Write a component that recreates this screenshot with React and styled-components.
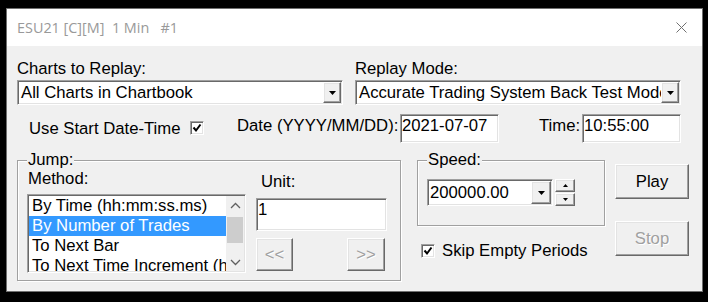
import React from 'react';
import styled, { createGlobalStyle, css } from 'styled-components';

const Global = createGlobalStyle`
  html, body { margin: 0; padding: 0; background: #000; }
  body { width: 708px; height: 302px; overflow: hidden; }
  * { box-sizing: border-box; }
`;

const sunken = css`
  border: 1px solid;
  border-color: #a0a0a0 #ffffff #ffffff #a0a0a0;
  box-shadow: inset 1px 1px 0 #696969, inset -1px -1px 0 #e3e3e3;
  background: #fff;
  padding: 1px;
`;

const raised = css`
  border: 1px solid;
  border-color: #ffffff #696969 #696969 #ffffff;
  box-shadow: inset -1px -1px 0 #a0a0a0, inset 1px 1px 0 #e3e3e3;
  background: #f0f0f0;
`;

const Window = styled.div`
  margin: 8px 0 0 6px;
  width: 697px;
  height: 284px;
  border: 1px solid #6f6f6f;
  background: #f0f0f0;
  display: flex;
  flex-direction: column;
  font-family: "Liberation Sans", Arial, sans-serif;
  font-size: 16.7px;
  line-height: 18px;
  color: #000;
`;

const TitleBar = styled.div`
  height: 37px;
  flex: none;
  background: #fff;
  display: flex;
  align-items: center;
  justify-content: space-between;
  padding: 0 15px 0 10px;
`;

const TitleText = styled.div`
  font-family: "Open Sans", "Noto Sans", sans-serif;
  font-size: 14.4px;
  color: #999999;
  white-space: pre;
  padding-top: 1px;
`;

const Body = styled.div`
  flex: 1;
  display: flex;
  flex-direction: column;
  padding: 14px 10px 0 10px;
`;

const TopRow = styled.div`
  display: flex;
  gap: 12px;
`;

const Field = styled.div`
  width: ${p => p.$w}px;
  display: flex;
  flex-direction: column;
`;

const Label = styled.div`
  white-space: nowrap;
  flex: none;
  margin-left: ${p => p.$left || 0}px;
  margin-top: ${p => p.$top || 0}px;
  width: ${p => (p.$w ? `${p.$w}px` : 'auto')};
  height: 18px;
`;

const Select = styled.div`
  ${sunken};
  margin-top: ${p => p.$mt ?? 2}px;
  display: flex;
  width: ${p => (p.$w ? `${p.$w}px` : '100%')};
  height: ${p => p.$h || 25}px;
`;

const SelectText = styled.div`
  flex: 1;
  overflow: hidden;
  white-space: nowrap;
  align-self: center;
  padding-left: ${p => p.$pad ?? 2}px;
`;

const DropBtn = styled.div`
  ${raised};
  width: ${p => p.$w || 18}px;
  flex: none;
  display: flex;
  align-items: center;
  justify-content: center;
`;

const SecondRow = styled.div`
  display: flex;
  align-items: flex-start;
  margin-top: 9px;
  height: 29px;
`;

const CheckBox = styled.div`
  ${sunken};
  width: 14px;
  height: 14px;
  flex: none;
  margin-top: ${p => p.$top || 0}px;
  margin-left: ${p => p.$left || 0}px;
  padding: 0;
  display: flex;
  align-items: center;
  justify-content: center;
`;

const TextInput = styled.div`
  ${sunken};
  flex: none;
  width: ${p => p.$w}px;
  height: ${p => p.$h}px;
  margin-top: ${p => p.$mt || 0}px;
  padding: ${p => p.$pt ?? 1}px 1px 0 1px;
  white-space: nowrap;
  overflow: hidden;
`;

const ThirdRow = styled.div`
  display: flex;
  align-items: flex-start;
  margin-top: 8px;
`;

const Group = styled.fieldset`
  margin: 0;
  min-width: 0;
  width: ${p => p.$w}px;
  height: ${p => p.$h}px;
  border: 1px solid #a0a0a0;
  box-shadow: inset 1px 1px 0 #fff, 1px 1px 0 #fff;
  padding: ${p => p.$pt}px 0 0 9px;
  display: flex;
  flex-direction: ${p => p.$dir || 'row'};
  align-items: flex-start;
`;

const Legend = styled.legend`
  padding: 0 1px;
  line-height: 18px;
  background: #f0f0f0;
`;

const Col = styled.div`
  display: flex;
  flex-direction: column;
  align-items: flex-start;
  flex: none;
  width: ${p => p.$w}px;
  margin-left: ${p => p.$left || 0}px;
`;

const ListBox = styled.div`
  ${sunken};
  margin-top: 6px;
  width: 219px;
  height: 79px;
  display: flex;
`;

const ListItems = styled.div`
  flex: 1;
  min-width: 0;
  overflow: hidden;
`;

const ListItem = styled.div`
  height: 20px;
  line-height: 20px;
  padding-left: 3px;
  white-space: nowrap;
  overflow: hidden;
  background: ${p => (p.$sel ? '#3399ff' : 'transparent')};
  color: ${p => (p.$sel ? '#fff' : '#000')};
`;

const ScrollBar = styled.div`
  width: 18px;
  flex: none;
  background: #f0f0f0;
  display: flex;
  flex-direction: column;
`;

const ScrollArrow = styled.div`
  height: 18px;
  display: flex;
  align-items: center;
  justify-content: center;
`;

const Thumb = styled.div`
  margin: 3px 1px 0 1px;
  height: 26px;
  background: #cdcdcd;
`;

const Track = styled.div`
  flex: 1;
`;

const BtnRow = styled.div`
  margin-top: 7px;
  width: 100%;
  display: flex;
  justify-content: space-between;
  padding-right: 2px;
`;

const Button = styled.div`
  ${raised};
  flex: none;
  width: ${p => p.$w}px;
  height: ${p => p.$h}px;
  margin-top: ${p => p.$top || 0}px;
  display: flex;
  align-items: center;
  justify-content: center;
  color: ${p => (p.$disabled ? '#a0a0a0' : '#000')};
  text-shadow: ${p => (p.$disabled ? '1px 1px 0 #fff' : 'none')};
`;

const ComboRow = styled.div`
  display: flex;
  gap: 2px;
`;

const Spin = styled.div`
  display: flex;
  flex-direction: column;
  gap: 1px;
  width: 20px;
  height: 27px;
`;

const SpinBtn = styled.div`
  ${raised};
  flex: 1;
  display: flex;
  align-items: center;
  justify-content: center;
`;

const CheckRow = styled.div`
  display: flex;
  align-items: center;
  height: 18px;
  margin-top: 16px;
`;

const Tri = ({ up, w = 7, h = 4 }) => (
  <svg width={w} height={h} viewBox={`0 0 ${w} ${h}`}>
    <polygon points={up ? `0,${h} ${w},${h} ${w / 2},0` : `0,0 ${w},0 ${w / 2},${h}`} fill="#000" />
  </svg>
);

const Chevron = ({ up }) => (
  <svg width="11" height="7" viewBox="0 0 11 7">
    <polyline
      points={up ? '1,6 5.5,1.5 10,6' : '1,1 5.5,5.5 10,1'}
      fill="none"
      stroke="#606060"
      strokeWidth="1.3"
    />
  </svg>
);

const Check = () => (
  <svg width="10" height="10" viewBox="0 0 10 10">
    <polyline points="1.5,4.5 4,7.5 8.5,1.5" fill="none" stroke="#000" strokeWidth="2" />
  </svg>
);

const CloseIcon = () => (
  <svg width="11" height="11" viewBox="0 0 11 11">
    <path d="M0.5 0.5 L10.5 10.5 M10.5 0.5 L0.5 10.5" stroke="#707070" strokeWidth="1" />
  </svg>
);

export default function App() {
  return (
    <>
      <Global />
      <Window>
        <TitleBar>
          <TitleText>{'ESU21 [C][M]  1 Min   #1'}</TitleText>
          <CloseIcon />
        </TitleBar>
        <Body>
          <TopRow>
            <Field $w={326}>
              <Label>Charts to Replay:</Label>
              <Select>
                <SelectText>All Charts in Chartbook</SelectText>
                <DropBtn><Tri /></DropBtn>
              </Select>
            </Field>
            <Field $w={326}>
              <Label>Replay Mode:</Label>
              <Select>
                <SelectText>Accurate Trading System Back Test Mode</SelectText>
                <DropBtn><Tri /></DropBtn>
              </Select>
            </Field>
          </TopRow>

          <SecondRow>
            <Label $left={12} $top={6} $w={161}>Use Start Date-Time</Label>
            <CheckBox $top={7}><Check /></CheckBox>
            <Label $left={33} $top={3} $w={163}>Date (YYYY/MM/DD):</Label>
            <TextInput $w={99} $h={29} $pt={2}>2021-07-07</TextInput>
            <Label $left={40} $top={3} $w={43}>Time:</Label>
            <TextInput $w={99} $h={29} $pt={2}>10:55:00</TextInput>
          </SecondRow>

          <ThirdRow>
            <Group $w={384} $h={130} $pt={1}>
              <Legend>Jump:</Legend>
              <Col $w={219}>
                <Label $left={1}>Method:</Label>
                <ListBox>
                  <ListItems>
                    <ListItem>By Time (hh:mm:ss.ms)</ListItem>
                    <ListItem $sel>By Number of Trades</ListItem>
                    <ListItem>To Next Bar</ListItem>
                    <ListItem>To Next Time Increment (hh:mm:ss)</ListItem>
                  </ListItems>
                  <ScrollBar>
                    <ScrollArrow><Chevron up /></ScrollArrow>
                    <Thumb />
                    <Track />
                    <ScrollArrow><Chevron /></ScrollArrow>
                  </ScrollBar>
                </ListBox>
              </Col>
              <Col $w={131} $left={10}>
                <Label $left={5} $top={3}>Unit:</Label>
                <TextInput $w={131} $h={33} $pt={2} $mt={7}>1</TextInput>
                <BtnRow>
                  <Button $w={37} $h={33} $disabled>&lt;&lt;</Button>
                  <Button $w={38} $h={33} $disabled>&gt;&gt;</Button>
                </BtnRow>
              </Col>
            </Group>

            <Col $w={188} $left={16}>
              <Group $w={188} $h={75} $pt={10} $dir="column">
                <Legend>Speed:</Legend>
                <ComboRow>
                  <Select $w={126} $h={27} $mt={0}>
                    <SelectText $pad={1}>200000.00</SelectText>
                    <DropBtn $w={20}><Tri /></DropBtn>
                  </Select>
                  <Spin>
                    <SpinBtn><Tri up w={5} h={3} /></SpinBtn>
                    <SpinBtn><Tri w={5} h={3} /></SpinBtn>
                  </Spin>
                </ComboRow>
              </Group>
              <CheckRow>
                <CheckBox $left={4}><Check /></CheckBox>
                <Label $left={7}>Skip Empty Periods</Label>
              </CheckRow>
            </Col>

            <Col $w={74} $left={10}>
              <Button $w={74} $h={35} $top={13}>Play</Button>
              <Button $w={74} $h={35} $top={22} $disabled>Stop</Button>
            </Col>
          </ThirdRow>
        </Body>
      </Window>
    </>
  );
}
